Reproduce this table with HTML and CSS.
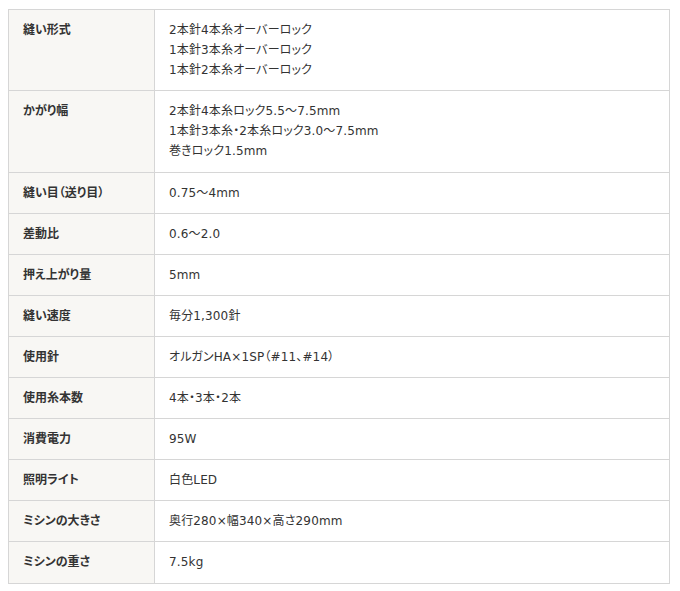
FILE: index.html
```html
<!DOCTYPE html>
<html lang="ja">
<head>
<meta charset="utf-8">
<link rel="stylesheet" href="styles.css">
</head>
<body>
<table class="spec">
<tbody>
<tr><th>縫い形式</th><td>2本針4本糸オーバーロック<br>1本針3本糸オーバーロック<br>1本針2本糸オーバーロック</td></tr>
<tr><th>かがり幅</th><td>2本針4本糸ロック5.5～7.5mm<br>1本針3本糸・2本糸ロック3.0～7.5mm<br>巻きロック1.5mm</td></tr>
<tr><th>縫い目（送り目）</th><td>0.75～4mm</td></tr>
<tr><th>差動比</th><td>0.6～2.0</td></tr>
<tr><th>押え上がり量</th><td>5mm</td></tr>
<tr><th>縫い速度</th><td>毎分1,300針</td></tr>
<tr><th>使用針</th><td>オルガンHA×1SP（#11、#14）</td></tr>
<tr><th>使用糸本数</th><td>4本・3本・2本</td></tr>
<tr><th>消費電力</th><td>95W</td></tr>
<tr><th>照明ライト</th><td>白色LED</td></tr>
<tr><th>ミシンの大きさ</th><td>奥行280×幅340×高さ290mm</td></tr>
<tr><th>ミシンの重さ</th><td>7.5kg</td></tr>
</tbody>
</table>
</body>
</html>
```
FILE: styles.css
```css
html, body {
  margin: 0;
  padding: 0;
  background: #fff;
}
body {
  padding: 9px 10px 0 8px;
  font-family: "DejaVu Sans", "Noto Sans CJK JP", sans-serif;
  font-feature-settings: "palt";
  font-size: 12px;
  color: #333;
}
.spec {
  width: 100%;
  border-collapse: collapse;
  border: 1px solid #d6d6d6;
}
.spec th, .spec td {
  border: 1px solid #d6d6d6;
  padding: 10px 14px;
  line-height: 20.1px;
  text-align: left;
  vertical-align: top;
}
.spec th {
  width: 117px;
  background: #f8f7f4;
  font-weight: bold;
  color: #333;
}
.spec td {
  padding-left: 14px;
  color: #333;
  letter-spacing: 0.15px;
}
```
